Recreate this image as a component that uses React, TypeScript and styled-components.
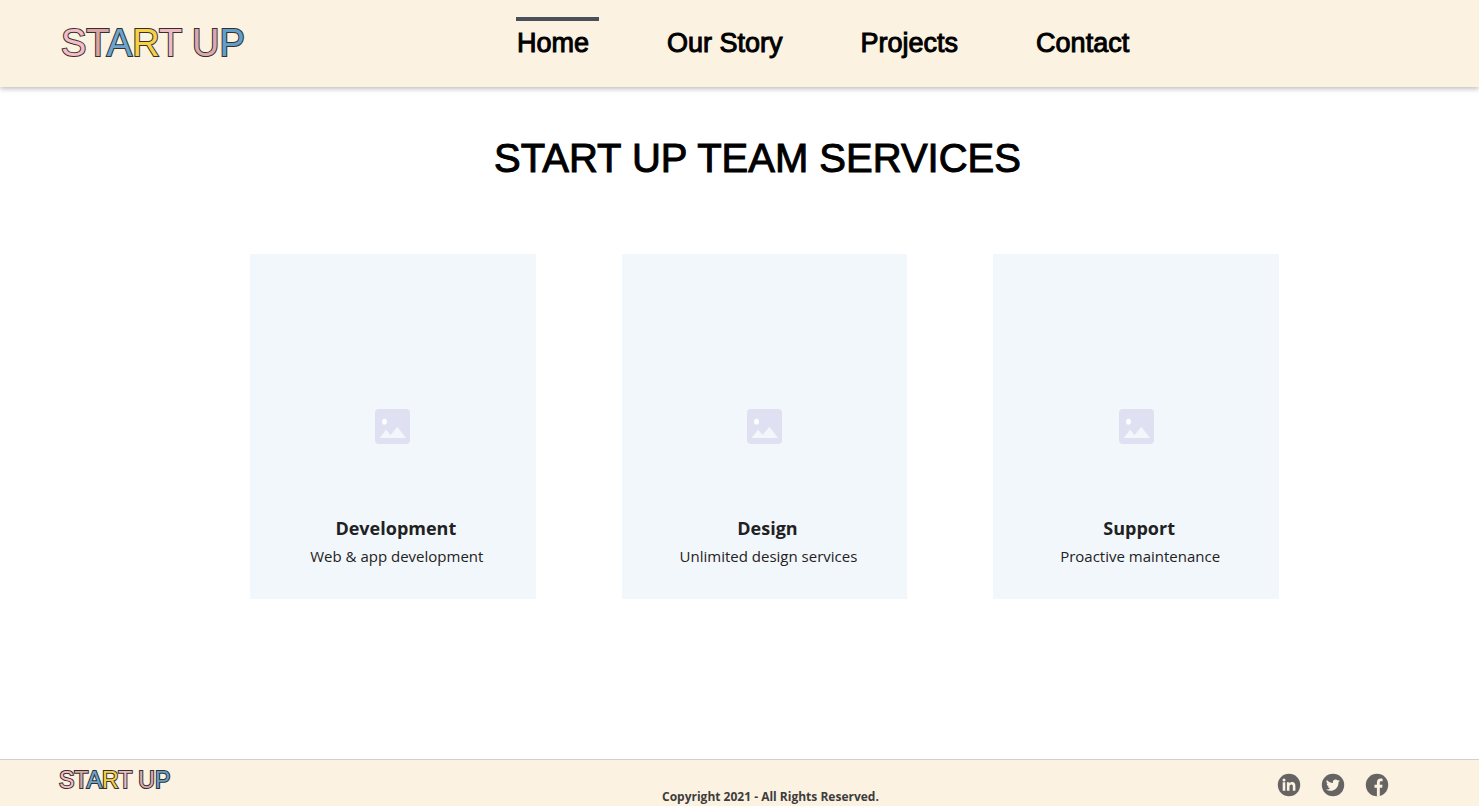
import React from "react";
import styled, { createGlobalStyle } from "styled-components";

const GlobalStyle = createGlobalStyle`
  *, *::before, *::after { box-sizing: border-box; }
  body { margin: 0; background: #fff; color: #000; font-family: "Liberation Sans", Arial, sans-serif; }
  h1, h2, p, ul { margin: 0; padding: 0; }
  ul { list-style: none; }
  a { color: inherit; text-decoration: none; }
`;

const captionFont = `"Segoe UI", "Open Sans", "Noto Sans", sans-serif`;

const Page = styled.div`
  min-height: 100vh;
  display: flex;
  flex-direction: column;
  padding-bottom: 1px;
`;

const Header = styled.header`
  display: grid;
  grid-template-columns: 456px 1fr;
  align-items: center;
  height: 87px;
  padding: 0 0 2px 61px;
  background: #fbf2e2;
  box-shadow: 0 2px 5px rgba(0, 0, 0, 0.25);
`;

const Wordmark = styled.a<{ $size: number }>`
  font-size: ${(p) => p.$size}px;
  line-height: 1;
  white-space: nowrap;
  -webkit-text-stroke: 2px #33302f;
  paint-order: stroke fill;
`;

const Letter = styled.span<{ $fill: string }>`
  color: ${(p) => p.$fill};
`;

const NavList = styled.ul`
  display: flex;
  gap: 78px;
`;

const NavLink = styled.a<{ $active?: boolean }>`
  position: relative;
  display: block;
  font-size: 27px;
  line-height: 32px;
  white-space: nowrap;
  -webkit-text-stroke: 1px #000;

  &::before {
    content: "";
    display: ${(p) => (p.$active ? "block" : "none")};
    position: absolute;
    top: -10px;
    left: -1px;
    width: 83px;
    height: 4px;
    background: #4a5059;
  }
`;

const Main = styled.main`
  flex: 1;
  padding: 47px 0 48px 50px;
`;

const Title = styled.h1`
  padding-right: 14px;
  font-size: 40px;
  font-weight: 400;
  line-height: 48px;
  text-align: center;
  -webkit-text-stroke: 1px #000;
`;

const Cards = styled.section`
  display: grid;
  grid-template-columns: repeat(3, 1fr);
  gap: 86px;
  max-width: 1029px;
  margin: 72px auto 0;
`;

const Card = styled.article`
  display: flex;
  flex-direction: column;
  background: #f2f7fc;
  padding: 155px 0 29px;
  color: #1f2222;
  font-family: ${captionFont};
  text-align: center;
`;

const Picture = styled.svg`
  display: block;
  width: 35px;
  height: 35px;
  margin: 0 auto 70px;
`;

const CardTitle = styled.h2`
  padding-left: 6px;
  font-size: 18px;
  font-weight: 700;
  line-height: 28px;
`;

const CardText = styled.p`
  padding-left: 8px;
  font-size: 15px;
  font-weight: 500;
  line-height: 28px;
`;

const Footer = styled.footer`
  display: grid;
  grid-template-columns: 603px 1fr auto;
  height: 47px;
  padding: 0 90px 0 59px;
  border-top: 1px solid #d3cfcf;
  background: #fbf2e2;
`;

const FooterBrand = styled.div`
  padding-top: 9px;
`;

const Copyright = styled.p`
  align-self: end;
  color: #3d3d3b;
  font: 700 12px/18px ${captionFont};
`;

const Socials = styled.ul`
  display: flex;
  align-items: center;
  gap: 20px;
  padding-top: 4px;

  svg { display: block; width: 24px; height: 24px; }
`;

const letters: [string, string][] = [
  ["S", "#f5bcc6"], ["T", "#d9a3a3"], ["A", "#6aa5d0"], ["R", "#f5d143"],
  ["T", "#efb9c2"], [" ", "#000"], ["U", "#dba9ad"], ["P", "#629fc8"],
];

const Logo = ({ size }: { size: number }) => (
  <Wordmark href="#" $size={size}>
    {letters.map(([char, fill], i) => <Letter key={i} $fill={fill}>{char}</Letter>)}
  </Wordmark>
);

const services = [
  { title: "Development", text: "Web & app development" },
  { title: "Design", text: "Unlimited design services" },
  { title: "Support", text: "Proactive maintenance" },
];

const socials = [
  {
    name: "LinkedIn",
    art: <path d="M5.700 9.300h2.600v8.400H5.700zM7 5.500a1.500 1.500 0 1 1 0 3 1.500 1.500 0 0 1 0-3zM9.900 9.300h2.500v1.200c.4-.7 1.300-1.400 2.700-1.400 2.700 0 3.300 1.700 3.300 4v4.600h-2.600v-4.100c0-1 0-2.200-1.300-2.200s-2 1-2 2.100v4.200H9.900z" />,
  },
  {
    name: "Twitter",
    art: <path transform="translate(5 5.200) scale(0.580)" d="M23.950 4.570a10 10 0 0 1-2.820.770 4.960 4.960 0 0 0 2.160-2.720c-.950.550-2 .960-3.130 1.180a4.920 4.920 0 0 0-8.380 4.480C7.690 8.090 4.070 6.130 1.640 3.160a4.920 4.920 0 0 0 1.520 6.570 4.900 4.900 0 0 1-2.230-.610v.060a4.920 4.920 0 0 0 3.950 4.830 5 5 0 0 1-2.210.080 4.940 4.940 0 0 0 4.600 3.420A9.870 9.870 0 0 1 0 19.540a13.990 13.990 0 0 0 7.550 2.210c9.050 0 14-7.500 14-13.980l-.020-.630a9.940 9.940 0 0 0 2.420-2.570z" />,
  },
  {
    name: "Facebook",
    art: <path d="M11.900 23.200v-8.400H9.500v-3h2.400V9.500c0-2.500 1.500-3.900 3.700-3.900.9 0 1.700.1 2 .1v2.600h-1.400c-1.100 0-1.400.6-1.400 1.400v2.100h2.700l-.4 3h-2.300v8.400z" />,
  },
];

export default function App() {
  return (
    <Page>
      <GlobalStyle />
      <Header>
        <Logo size={38} />
        <nav>
          <NavList>
            <li><NavLink href="#" $active>Home</NavLink></li>
            <li><NavLink href="#">Our Story</NavLink></li>
            <li><NavLink href="#">Projects</NavLink></li>
            <li><NavLink href="#">Contact</NavLink></li>
          </NavList>
        </nav>
      </Header>
      <Main>
        <Title>START UP TEAM SERVICES</Title>
        <Cards>
          {services.map((s) => (
            <Card key={s.title}>
              <Picture viewBox="0 0 35 35" aria-hidden="true">
                <rect width="35" height="35" rx="4" fill="#dfe1f3" />
                <ellipse cx="9.500" cy="12.700" rx="2.400" ry="2.900" fill="#fff" />
                <path d="M4.600 29 11.100 20.800 15.600 26 22.300 17.800 31 29z" fill="#f2f7fc" />
              </Picture>
              <CardTitle>{s.title}</CardTitle>
              <CardText>{s.text}</CardText>
            </Card>
          ))}
        </Cards>
      </Main>
      <Footer>
        <FooterBrand><Logo size={23} /></FooterBrand>
        <Copyright>Copyright 2021 - All Rights Reserved.</Copyright>
        <Socials>
          {socials.map((s) => (
            <li key={s.name}>
              <a href="#" aria-label={s.name}>
                <svg viewBox="0 0 24 24" fill="#fbf2e2" aria-hidden="true">
                  <circle cx="12" cy="12" r="11.200" fill="#656463" />
                  {s.art}
                </svg>
              </a>
            </li>
          ))}
        </Socials>
      </Footer>
    </Page>
  );
}
